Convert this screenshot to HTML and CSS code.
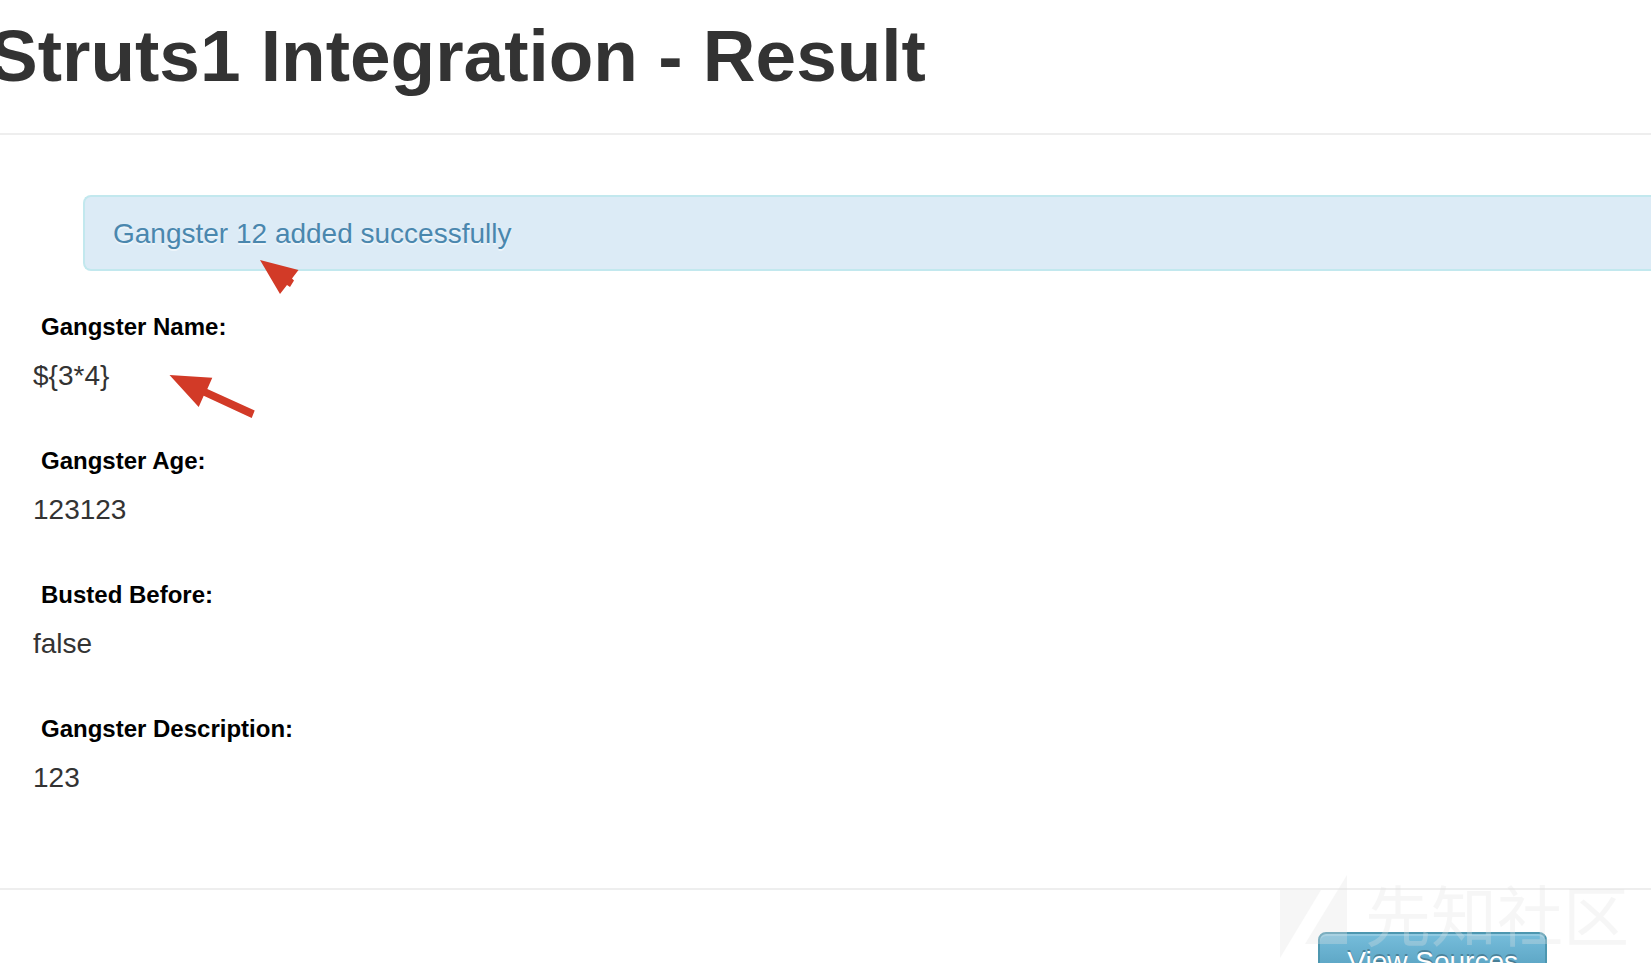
FILE: index.html
```
<!DOCTYPE html>
<html lang="en">
<head>
<meta charset="utf-8">
<title>Struts1 Integration - Result</title>
<link rel="stylesheet" href="styles.css">
</head>
<body>
<header class="page-header">
  <h1 class="page-title">Struts1 Integration - Result</h1>
</header>
<main class="result">
  <div class="alert" role="status">Gangster 12 added successfully
    <svg class="arrow arrow-alert" width="40" height="36" viewBox="260 260 40 36" aria-hidden="true"><path d="M260 260 298.5 270 292 278.5 294 280.5 290 287 287 285 280 294Z"/></svg>
  </div>
  <dl class="fields">
    <div class="field">
      <dt>Gangster Name:</dt>
      <dd>${3*4}</dd>
      <svg class="arrow arrow-name" width="88" height="46" viewBox="168 374 88 46" aria-hidden="true"><path d="M168.500 375 211.300 377.700 206.300 389 253.700 410.500 250.700 418 202.700 395.700 197.700 407Z"/></svg>
    </div>
    <div class="field">
      <dt>Gangster Age:</dt>
      <dd>123123</dd>
    </div>
    <div class="field">
      <dt>Busted Before:</dt>
      <dd>false</dd>
    </div>
    <div class="field">
      <dt>Gangster Description:</dt>
      <dd>123</dd>
    </div>
  </dl>
</main>
<footer class="page-footer">
  <a class="btn" href="#sources">View Sources</a>
  <div class="watermark">
    <svg width="68" height="84" viewBox="0 0 68 84" aria-hidden="true"><path d="M0 15H41L0 83ZM67 0V69H25Z"/></svg>
    <span lang="zh">先知社区</span>
  </div>
</footer>
</body>
</html>
```
FILE: styles.css
```
* {
  box-sizing: border-box;
}

body {
  margin: 0;
  height: 100vh;
  overflow: hidden;
  background: #fff;
  color: #333;
  font-family: "Liberation Sans", Helvetica, Arial, sans-serif;
  font-size: 28px;
  line-height: 40px;
}

.page-header {
  padding: 16px 0 37px;
  border-bottom: 2px solid #eee;
}

.page-title {
  margin: 0 0 0 -11px;
  font-size: 73px;
  line-height: 80px;
}

.alert {
  position: relative;
  margin: 60px 0 36px 83px;
  padding: 17px 28px 15px;
  border: 2px solid #c2e8ee;
  border-right: 0;
  border-radius: 8px 0 0 8px;
  background: #dcebf6;
  color: #4a87ae;
  text-shadow: 0 2px 0 rgba(255, 255, 255, 0.5);
}

.fields {
  margin: 0 0 90px;
  padding-left: 33px;
  display: grid;
  gap: 45px;
}

.field {
  position: relative;
  display: grid;
  gap: 9px;
}

.field dt {
  padding-left: 8px;
  color: #000;
  font-size: 24px;
  font-weight: bold;
}

.field dd {
  margin: 0;
}

.arrow {
  position: absolute;
  fill: #d23a27;
}

.arrow-alert {
  left: 175px;
  top: 63px;
}

.arrow-name {
  left: 136px;
  top: 67px;
}

.page-footer {
  position: relative;
  display: flex;
  justify-content: flex-end;
  padding: 42px 104px 42px 0;
  border-top: 2px solid #eee;
}

.btn {
  padding: 8px 27px;
  border: 2px solid #4d97b0;
  border-radius: 8px;
  background: linear-gradient(#76bddb, #4a94b4);
  box-shadow: inset 0 2px 0 rgba(255, 255, 255, 0.2);
  color: #fff;
  text-decoration: none;
  text-shadow: 0 -2px 0 rgba(0, 0, 0, 0.25);
}

.watermark {
  position: absolute;
  right: 22px;
  top: -15px;
  display: flex;
  align-items: flex-start;
  gap: 17px;
  color: #e4e4e4;
  font-family: "Noto Sans CJK SC", sans-serif;
  font-size: 66px;
  line-height: 74px;
  opacity: 0.3;
  pointer-events: none;
}

.watermark svg {
  fill: currentColor;
}
```
